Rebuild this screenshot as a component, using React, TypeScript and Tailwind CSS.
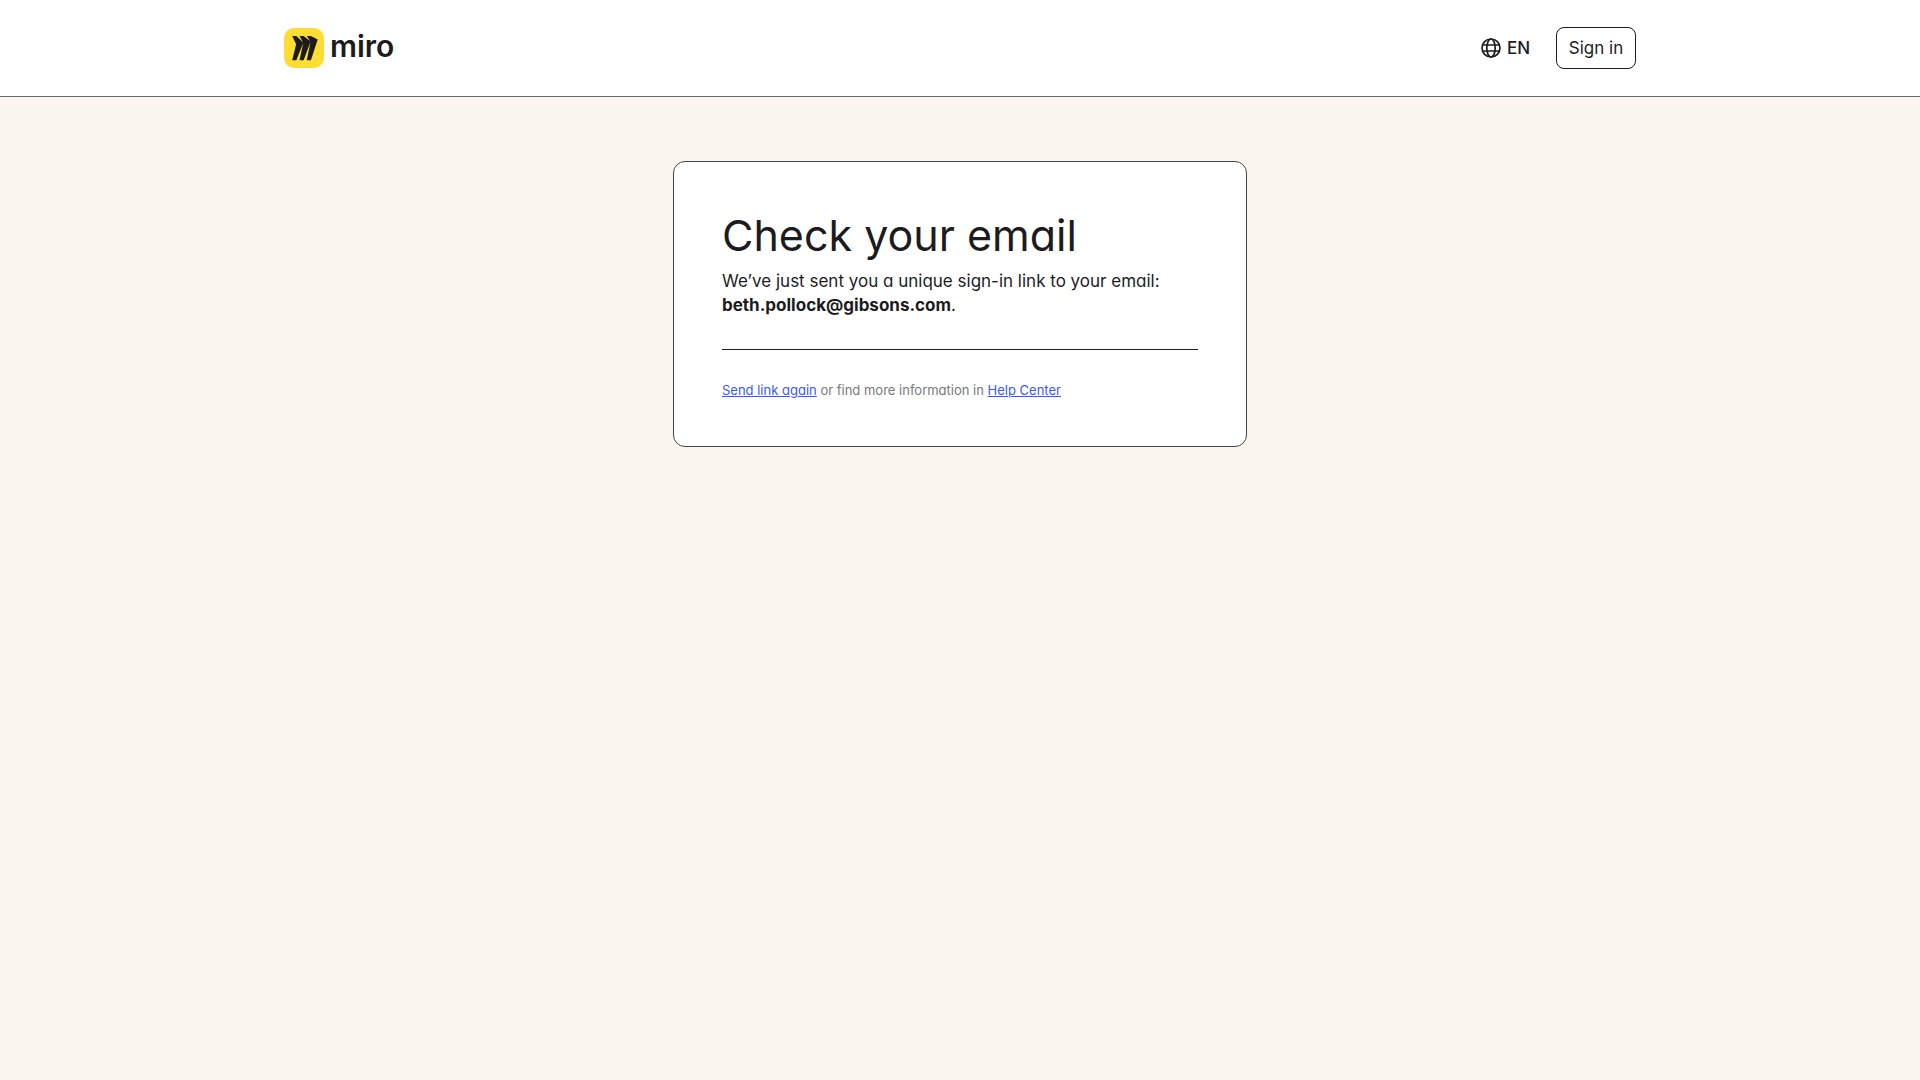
import React from "react";

const EMAIL = "beth.pollock@gibsons.com";

export default function App() {
  return (
    <div className="flex min-h-screen flex-col bg-[#fbf6ef] font-['Inter','Liberation_Sans',sans-serif] text-[#1c1c1e]">
      <Header />
      <main className="flex justify-center px-4 py-16">
        <CheckEmailCard email={EMAIL} />
      </main>
    </div>
  );
}

function Header() {
  return (
    <header className="border-b border-[#656b70] bg-white">
      <div className="mx-auto flex h-24 max-w-[1352px] items-center justify-between">
        <a href="#" className="flex items-center gap-1.5" aria-label="miro">
          <MiroMark />
          <span className="pb-1 text-[30px] leading-8 font-semibold">miro</span>
        </a>
        <div className="flex items-center gap-[26px]">
          <button type="button" className="flex cursor-pointer items-center gap-1.5 text-[17px] leading-6 font-medium">
            <GlobeIcon />
            EN
          </button>
          <button type="button" className="h-[42px] w-20 cursor-pointer rounded-lg border border-[#1c1c1e] text-[17px] leading-6">
            Sign in
          </button>
        </div>
      </div>
    </header>
  );
}

function CheckEmailCard({ email }: { email: string }) {
  return (
    <section className="w-full max-w-[574px] rounded-xl border border-[#43454b] bg-white px-12 pt-12 pb-11 [font-feature-settings:'cv11']">
      <h1 className="text-[43px] leading-[51px] font-normal">Check your email</h1>
      <p className="mt-2 text-[17px] leading-6">
        We’ve just sent you a unique sign-in link to your email:{" "}
        <strong className="font-bold">{email}</strong>.
      </p>
      <hr className="mt-8 mb-7 border-[#1c1c1e]" />
      <p className="text-[13px] leading-6 text-[#77797d]">
        <a href="#" className="text-[#3859ff] underline">Send link again</a>
        {" or find more information in "}
        <a href="#" className="text-[#3859ff] underline">Help Center</a>
      </p>
    </section>
  );
}

function MiroMark() {
  return (
    <svg className="size-10" viewBox="0 0 40 40" fill="none" aria-hidden="true">
      <rect width="40" height="40" rx="10" fill="#ffdd33" />
      <path
        transform="translate(8.2 7.9)"
        fill="#1c1c1e"
        d="M18.7 0H14.6L17.9 5.1L11.4 0H7.3L10.7 6.3L4.1 0H0L3.9 8.4L0 24.4H4.1L11 7.2L7.3 24.4H11.4L18.3 6L14.6 24.4H18.7L25.5 3.7Z"
      />
    </svg>
  );
}

function GlobeIcon() {
  return (
    <svg className="size-5" viewBox="0 0 20 20" fill="none" stroke="currentColor" strokeWidth="1.7" aria-hidden="true">
      <circle cx="10" cy="10" r="9" />
      <ellipse cx="10" cy="10" rx="4.2" ry="9" />
      <path d="M1.5 7h17M1.5 13h17" />
    </svg>
  );
}
